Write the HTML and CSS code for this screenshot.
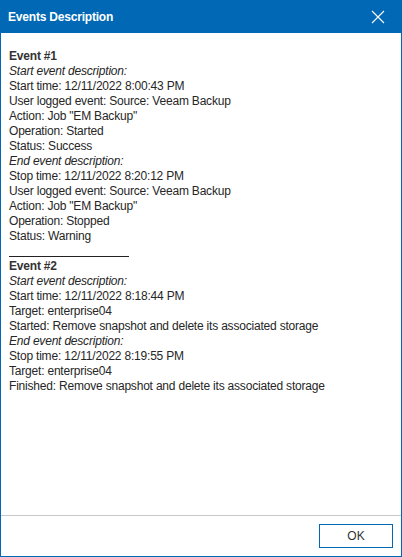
FILE: index.html
```html
<!DOCTYPE html>
<html lang="en">

<head>
    <meta charset="utf-8">
    <title>Events Description</title>
    <link rel="stylesheet" href="styles.css">
</head>

<body>
    <div class="dialog">
        <div class="title-bar">
            <span class="title">Events Description</span>
            <svg class="close" width="14" height="14" viewBox="0 0 14 14">
                <path d="M1 1 L13 13 M13 1 L1 13" stroke="#fff" stroke-width="1.1" fill="none" />
            </svg>
        </div>

        <div class="content">
            <p class="event-title">Event #1</p>
            <p class="note">Start event description:</p>
            <p>Start time: 12/11/2022 8:00:43 PM</p>
            <p>User logged event: Source: Veeam Backup</p>
            <p>Action: Job "EM Backup"</p>
            <p>Operation: Started</p>
            <p>Status: Success</p>
            <p class="note">End event description:</p>
            <p>Stop time: 12/11/2022 8:20:12 PM</p>
            <p>User logged event: Source: Veeam Backup</p>
            <p>Action: Job "EM Backup"</p>
            <p>Operation: Stopped</p>
            <p>Status: Warning</p>
            <div class="separator"></div>
            <p class="event-title">Event #2</p>
            <p class="note">Start event description:</p>
            <p>Start time: 12/11/2022 8:18:44 PM</p>
            <p>Target: enterprise04</p>
            <p>Started: Remove snapshot and delete its associated storage</p>
            <p class="note">End event description:</p>
            <p>Stop time: 12/11/2022 8:19:55 PM</p>
            <p>Target: enterprise04</p>
            <p>Finished: Remove snapshot and delete its associated storage</p>
        </div>

        <div class="footer">
            <button class="ok-button">OK</button>
        </div>
    </div>
</body>

</html>
```

FILE: styles.css
```css
html, body {
    margin: 0;
    padding: 0;
}

body {
    font-family: "Liberation Sans", Arial, sans-serif;
    font-size: 12px;
    color: #262626;
}

.dialog {
    display: flex;
    flex-direction: column;
    width: 402px;
    height: 557px;
    box-sizing: border-box;
    border: 1px solid #0068b5;
    border-top: none;
    background-color: #fff;
}

.title-bar {
    display: flex;
    align-items: center;
    justify-content: space-between;
    height: 33px;
    margin: 0 -1px;
    padding: 0 17px 0 8px;
    background-color: #0068b5;
    color: #fff;
}

.title {
    font-size: 12px;
    font-weight: bold;
    letter-spacing: -0.2px;
}

.content {
    flex: 1;
    padding: 16px 8px 0 8px;

    p {
        margin: 0;
        line-height: 15px;
        white-space: nowrap;
        letter-spacing: -0.2px;
    }
}

.event-title {
    font-weight: bold;
    color: #333;
}

.note {
    font-style: italic;
}

.separator {
    width: 120px;
    height: 13px;
    box-sizing: border-box;
    border-bottom: 1px solid #222;
    margin-bottom: 2px;
}

.footer {
    display: flex;
    justify-content: flex-end;
    height: 41px;
    box-sizing: border-box;
    padding: 8px 8px 0 0;
    border-top: 1px solid #c8c8c8;
}

.ok-button {
    width: 74px;
    height: 24px;
    border: 1px solid #0068b5;
    background-color: #fff;
    color: #333;
    font-family: "Liberation Sans", Arial, sans-serif;
    font-size: 12px;
    padding: 0;
}
```
